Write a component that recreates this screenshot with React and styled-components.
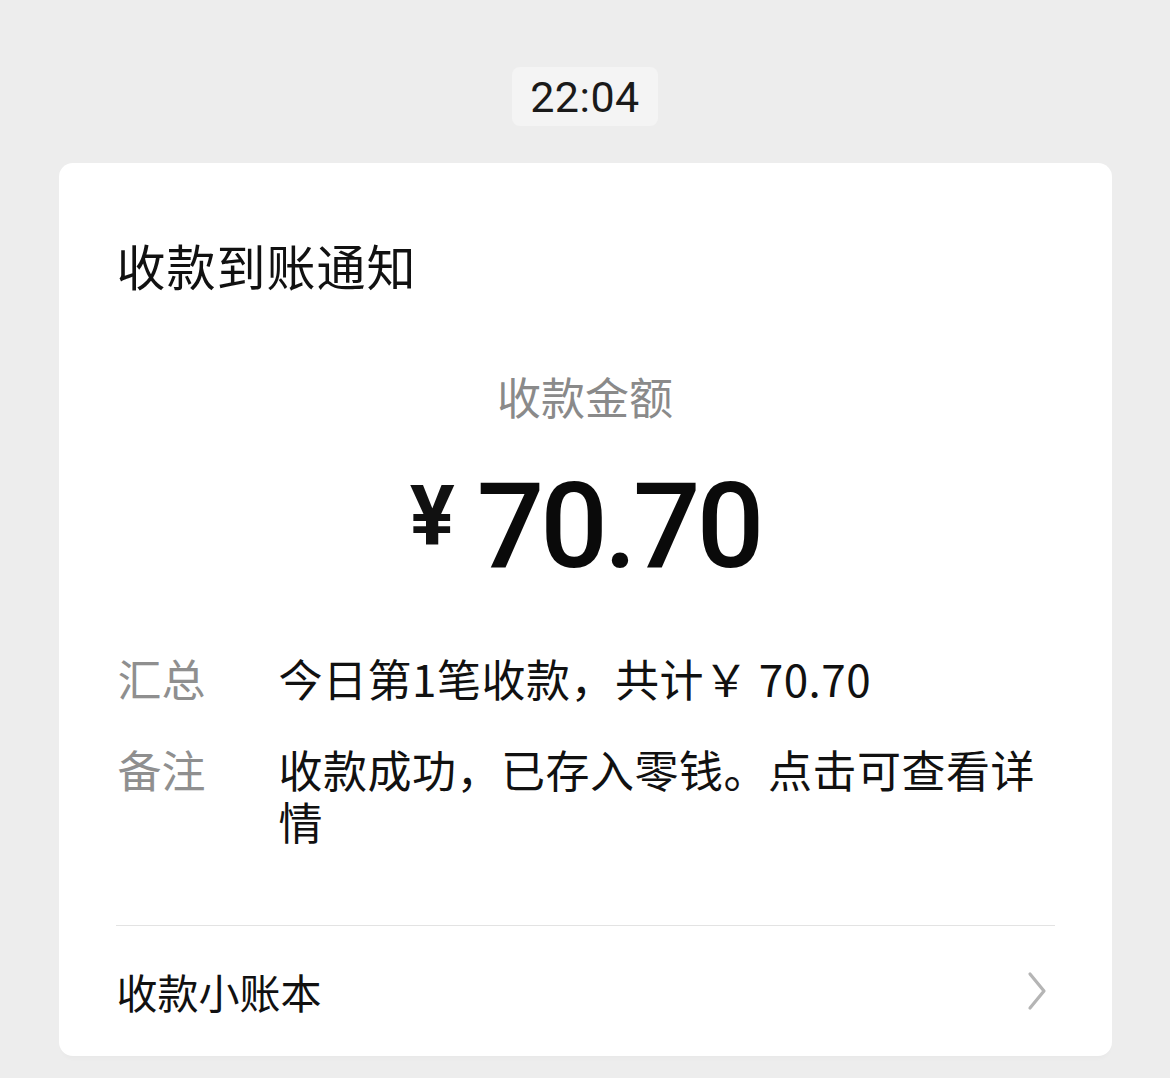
import React from 'react'
import styled, { createGlobalStyle } from 'styled-components'

const GlobalStyle = createGlobalStyle`
  html, body {
    margin: 0;
    padding: 0;
    background: #ededed;
  }
  body {
    font-family: "Noto Sans CJK SC", "Noto Sans", sans-serif;
    color: #111;
  }
`

const Page = styled.div`
  display: flex;
  flex-direction: column;
  align-items: center;
  padding-top: 67px;
  min-height: 1078px;
  box-sizing: border-box;
`

const TimePill = styled.div`
  width: 146px;
  height: 59px;
  border-radius: 8px;
  background: #f4f4f4;
  display: flex;
  align-items: center;
  justify-content: center;
  font-family: Roboto, "Liberation Sans", sans-serif;
  font-size: 43px;
  color: #1a1a1a;
  letter-spacing: 0.5px;
`

const Card = styled.div`
  margin-top: 37px;
  width: 1053px;
  height: 893px;
  box-sizing: border-box;
  background: #fff;
  border-radius: 14px;
  padding: 74px 57px 0 57px;
  display: flex;
  flex-direction: column;
  box-shadow: 0 5px 4px -2px rgba(0, 0, 0, 0.02);
`

const Title = styled.div`
  font-size: 49px;
  line-height: 56px;
  letter-spacing: 1px;
  color: #111;
  padding-left: 1px;
`

const AmountLabel = styled.div`
  margin-top: 75px;
  text-align: center;
  font-size: 44px;
  line-height: 56px;
  color: #8a8a8a;
`

const AmountRow = styled.div`
  margin-top: 35px;
  height: 130px;
  display: flex;
  justify-content: center;
  align-items: center;
`

const Currency = styled.span`
  font-family: Roboto, "Liberation Sans", sans-serif;
  font-weight: 700;
  font-size: 84px;
  line-height: 1;
  margin-right: 22px;
  align-self: flex-start;
  margin-top: 16px;
`

const Amount = styled.span`
  font-family: Roboto, "Liberation Sans", sans-serif;
  font-weight: 500;
  font-size: 119px;
  line-height: 130px;
  letter-spacing: -4px;
  color: #0a0a0a;
  margin-top: 6px;
`

const InfoList = styled.div`
  margin-top: 63px;
  display: flex;
  flex-direction: column;
  gap: 39px;
`

const InfoRow = styled.div`
  display: grid;
  grid-template-columns: 163px 1fr;
  font-size: 44px;
  line-height: 52px;
`

const InfoLabel = styled.div`
  color: #8f8f8f;
  padding-left: 2px;
`

const InfoValue = styled.div`
  color: #111;
  letter-spacing: 0.5px;
`

const Divider = styled.div`
  margin-top: 78px;
  height: 1px;
  background: #e3e3e3;
`

const Footer = styled.div`
  flex: 1;
  display: flex;
  align-items: center;
  justify-content: space-between;
`

const FooterText = styled.div`
  font-size: 41px;
  line-height: 52px;
  color: #111;
  padding-left: 1px;
`

const Chevron = () => (
  <svg width="24" height="40" viewBox="0 0 24 40" style={{ marginRight: 6 }}>
    <polyline
      points="5,3 19,20 5,37"
      fill="none"
      stroke="#b5b5b5"
      strokeWidth="3.2"
      strokeLinecap="round"
      strokeLinejoin="round"
    />
  </svg>
)

export default function App() {
  return (
    <>
      <GlobalStyle />
      <Page>
        <TimePill>22:04</TimePill>
        <Card>
          <Title>收款到账通知</Title>
          <AmountLabel>收款金额</AmountLabel>
          <AmountRow>
            <Currency>¥</Currency>
            <Amount>70.70</Amount>
          </AmountRow>
          <InfoList>
            <InfoRow>
              <InfoLabel>汇总</InfoLabel>
              <InfoValue>今日第1笔收款，共计￥ 70.70</InfoValue>
            </InfoRow>
            <InfoRow>
              <InfoLabel>备注</InfoLabel>
              <InfoValue>收款成功，已存入零钱。点击可查看详情</InfoValue>
            </InfoRow>
          </InfoList>
          <Divider />
          <Footer>
            <FooterText>收款小账本</FooterText>
            <Chevron />
          </Footer>
        </Card>
      </Page>
    </>
  )
}
